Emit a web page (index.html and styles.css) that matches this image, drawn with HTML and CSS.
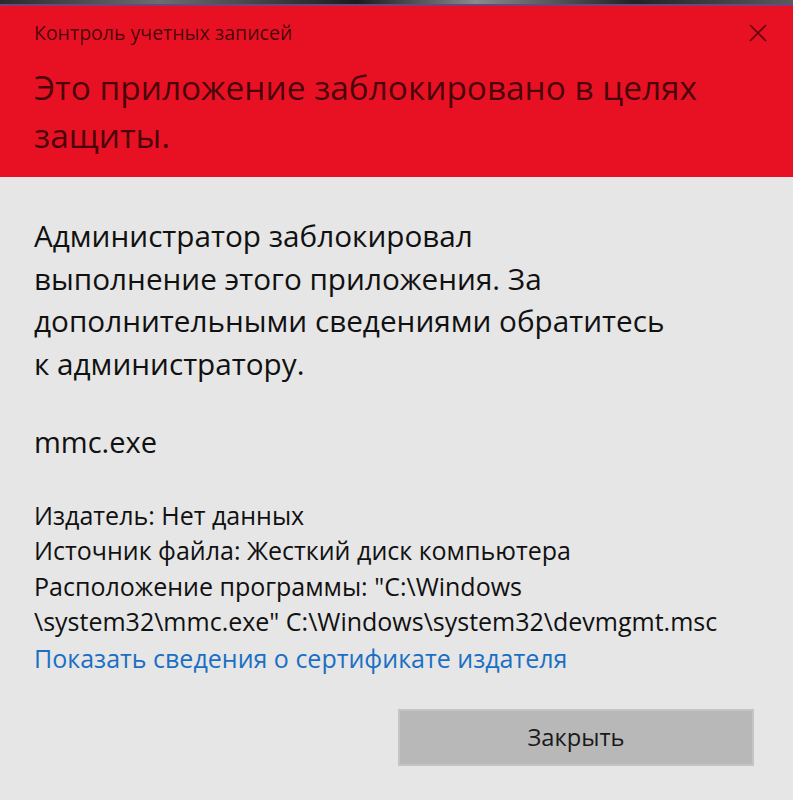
FILE: index.html
```html
<!DOCTYPE html>
<html lang="ru">
<head>
    <meta charset="UTF-8">
    <meta name="viewport" content="width=device-width, initial-scale=1.0">
    <title>Контроль учетных записей</title>
    <link rel="stylesheet" href="styles.css">
</head>
<body>
    <div class="backdrop"></div>
    <div class="dialog">
        <header class="banner">
            <div class="banner-top">
                <span class="caption">Контроль учетных записей</span>
                <svg class="close-x" width="18" height="18" viewBox="0 0 18 18">
                    <path d="M1 1 L17 17 M17 1 L1 17" stroke="currentColor" stroke-width="1.6" fill="none"/>
                </svg>
            </div>
            <h1 class="headline">Это приложение заблокировано в целях<br>защиты.</h1>
        </header>

        <main class="content">
            <p class="message">Администратор заблокировал<br>выполнение этого приложения. За<br>дополнительными сведениями обратитесь<br>к администратору.</p>
            <p class="app-name">mmc.exe</p>
            <div class="details">
                <div>Издатель: Нет данных</div>
                <div>Источник файла: Жесткий диск компьютера</div>
                <div>Расположение программы: "C:\Windows<br>\system32\mmc.exe" C:\Windows\system32\devmgmt.msc</div>
            </div>
            <a class="cert-link" href="#">Показать сведения о сертификате издателя</a>
            <div class="actions">
                <button class="close-btn">Закрыть</button>
            </div>
        </main>
    </div>
</body>
</html>
```

FILE: styles.css
```css
body {
    margin: 0;
    background-color: #e6e6e6;
    font-family: "Open Sans", "Noto Sans", sans-serif;
    color: #111;
}
.backdrop {
    height: 4px;
    background: linear-gradient(90deg, #2a2a2a, #6d6d6d 20%, #1b1b1b 45%, #8a8a8a 60%, #222 80%, #5a5a5a);
    border-bottom: 2px solid #6f4384;
}
.banner {
    background-color: #e81123;
    color: rgba(0, 0, 0, 0.7);
    padding: 15px 26px 18px 34px;
}
.banner-top {
    display: flex;
    justify-content: space-between;
    align-items: center;
    height: 24px;
}
.caption {
    font-size: 19.5px;
    line-height: 24px;
}
.close-x {
    color: rgba(0, 0, 0, 0.6);
}
.headline {
    margin: 18px 0 0;
    font-size: 33.4px;
    font-weight: normal;
    line-height: 48px;
}
.content {
    padding: 38px 39px 0 34px;
}
.message {
    margin: 0;
    font-size: 29.7px;
    line-height: 42.7px;
}
.app-name {
    margin: 35px 0 0;
    font-size: 29px;
    line-height: 42px;
}
.details {
    margin-top: 35px;
    font-size: 25px;
    line-height: 35.5px;
}
.cert-link {
    display: block;
    font-size: 25px;
    line-height: 36px;
    color: #1a6fc4;
    text-decoration: none;
}
.actions {
    display: flex;
    justify-content: flex-end;
    margin-top: 33px;
}
.close-btn {
    width: 356px;
    height: 57px;
    background-color: #b8b8b8;
    border: 2px solid #c4c4c4;
    font-family: inherit;
    font-size: 23.7px;
    color: #1a1a1a;
    cursor: pointer;
}
```
